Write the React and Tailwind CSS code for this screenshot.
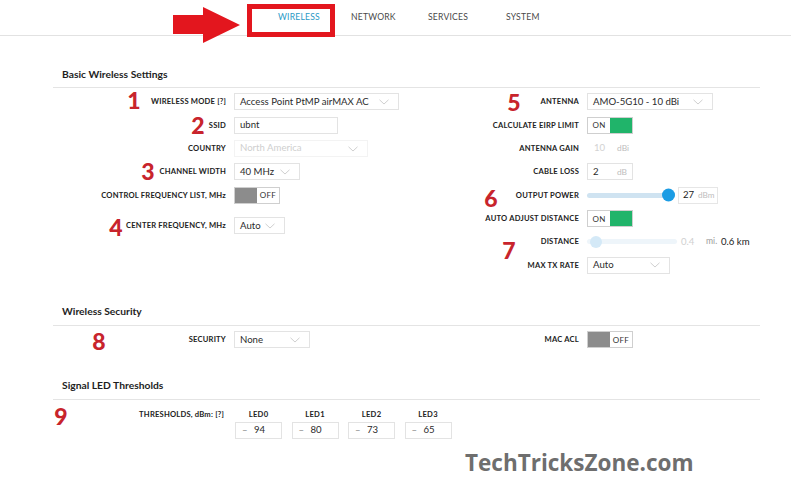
import React from 'react';

const Chevron = () => (
  <svg width="10" height="6" viewBox="0 0 10 6" className="shrink-0">
    <path d="M0.5 0.8 L5 5 L9.5 0.8" fill="none" stroke="#c9c9c9" strokeWidth="0.9" />
  </svg>
);

const Label = ({ children, className = '' }) => (
  <div className={`shrink-0 text-right text-[7.6px] font-bold tracking-[0.2px] text-[#222] ${className}`}>{children}</div>
);

const Select = ({ value, className = '', disabled }) => (
  <div
    className={`flex h-[17px] items-center justify-between border pl-[5px] pr-[9px] text-[9.6px] ${
      disabled ? 'border-[#f3f3f3] text-[#cfcfcf]' : 'border-[#e3e3e3] text-[#2b2b2b]'
    } ${className}`}
  >
    <span>{value}</span>
    <Chevron />
  </div>
);

const Switch = ({ on }) => (
  <div className="flex h-[17px] w-[46px] border border-[#cfcfcf] text-[8px] tracking-[0.3px]">
    {on ? (
      <>
        <div className="flex w-1/2 items-center justify-center text-[#333]">ON</div>
        <div className="w-1/2 bg-[#20b46a]" />
      </>
    ) : (
      <>
        <div className="w-1/2 bg-[#8c8c8c]" />
        <div className="flex w-1/2 items-center justify-center text-[#333]">OFF</div>
      </>
    )}
  </div>
);

const Row = ({ label, labelW, children, className = '' }) => (
  <div className={`flex h-[23.33px] items-center gap-[8px] ${className}`}>
    <Label className={labelW}>{label}</Label>
    {children}
  </div>
);

const Num = ({ n, x, y }) => (
  <span
    className="absolute -translate-x-1/2 -translate-y-1/2 text-[23px] font-black leading-none text-[#c8242c]"
    style={{ left: x, top: y }}
  >
    {n}
  </span>
);

const SectionTitle = ({ children, className = '' }) => (
  <div className={`h-[21px] border-b border-[#e4e4e4] pl-[9px] text-[10.3px] font-bold leading-[14px] text-[#1e1e1e] ${className}`}>
    {children}
  </div>
);

const LeftW = 'w-[173px]';
const RightW = 'w-[179px]';

export default function App() {
  return (
    <div className="relative h-[482px] w-[791px] overflow-hidden bg-white font-['Lato','Noto_Sans',sans-serif]">
      {/* top nav */}
      <div className="flex h-[36px] items-center border-b border-[#e2e2e2] pl-[278px] text-[8.6px] tracking-[0.2px] text-[#4a4a4a]">
        <div className="w-[73px] text-[#2b9ac6]">WIRELESS</div>
        <div className="w-[77px]">NETWORK</div>
        <div className="w-[78px]">SERVICES</div>
        <div>SYSTEM</div>
      </div>

      {/* annotation: arrow + box */}
      <svg className="absolute left-[172px] top-[6px]" width="70" height="38" viewBox="0 0 70 38">
        <path d="M1 9 L31 9 L31 1 L68 19 L31 37 L31 28 L1 28 Z" fill="#e3161e" />
      </svg>
      <div className="absolute left-[247px] top-[4px] h-[33px] w-[88px] border-[5px] border-[#e3161e]" />

      <div className="ml-[53px] w-[707px]">
        <SectionTitle className="mt-[31px]">Basic Wireless Settings</SectionTitle>

        <div className="flex pt-[2.3px]">
          <div className="w-[347px]">
            <Row label="WIRELESS MODE [?]" labelW={LeftW}>
              <Select value="Access Point PtMP airMAX AC" className="w-[165px]" />
            </Row>
            <Row label="SSID" labelW={LeftW}>
              <div className="flex h-[17px] w-[104px] items-center border border-[#e3e3e3] pl-[5px] text-[9.6px] text-[#2b2b2b]">ubnt</div>
            </Row>
            <Row label="COUNTRY" labelW={LeftW}>
              <Select value="North America" disabled className="w-[134px]" />
            </Row>
            <Row label="CHANNEL WIDTH" labelW={LeftW}>
              <Select value="40 MHz" className="w-[66px]" />
            </Row>
            <Row label="CONTROL FREQUENCY LIST, MHz" labelW={LeftW}>
              <Switch on={false} />
            </Row>
            <Row label="CENTER FREQUENCY, MHz" labelW={LeftW} className="mt-[7.3px]">
              <Select value="Auto" className="w-[51px]" />
            </Row>
          </div>

          <div>
            <Row label="ANTENNA" labelW={RightW}>
              <Select value="AMO-5G10 - 10 dBi" className="w-[126px]" />
            </Row>
            <Row label="CALCULATE EIRP LIMIT" labelW={RightW}>
              <Switch on />
            </Row>
            <Row label="ANTENNA GAIN" labelW={RightW}>
              <div className="flex h-[17px] w-[46px] items-center pl-[7px] text-[9.6px] text-[#d2d2d2]">
                <span className="w-[23px]">10</span>
                <span className="text-[8.4px] text-[#bdbdbd]">dBi</span>
              </div>
            </Row>
            <Row label="CABLE LOSS" labelW={RightW}>
              <div className="flex h-[17px] w-[46px] items-center justify-between border border-[#e3e3e3] pl-[5px] pr-[5px] text-[9.6px] text-[#2b2b2b]">
                <span>2</span>
                <span className="text-[8.4px] text-[#bdbdbd]">dB</span>
              </div>
            </Row>
            <Row label="OUTPUT POWER" labelW={RightW}>
              <div className="relative h-[5px] w-[88px] rounded-full bg-[#cfe3f1]">
                <div className="absolute left-[75px] top-1/2 h-[13px] w-[13px] -translate-y-1/2 rounded-full bg-[#1b9ce4]" />
              </div>
              <div className="-ml-[5px] flex h-[17px] w-[40px] items-center border border-[#e6e6e6] pl-[4px] text-[9.6px] text-[#222]">
                <span className="w-[15px]">27</span>
                <span className="text-[8.2px] text-[#bdbdbd]">dBm</span>
              </div>
            </Row>
            <Row label="AUTO ADJUST DISTANCE" labelW={RightW}>
              <Switch on />
            </Row>
            <Row label="DISTANCE" labelW={RightW}>
              <div className="relative h-[5px] w-[90px] rounded-full bg-[#eef5fa]">
                <div className="absolute left-[3px] top-1/2 h-[12px] w-[12px] -translate-y-1/2 rounded-full bg-[#d4e9f7]" />
              </div>
              <div className="flex items-center text-[9.6px]">
                <span className="-ml-[4px] w-[25px] text-[#d0d0d0]">0.4</span>
                <span className="w-[15px] text-[8.6px] text-[#9a9a9a]">mi.</span>
                <span className="text-[#222]">0.6 km</span>
              </div>
            </Row>
            <Row label="MAX TX RATE" labelW={RightW}>
              <Select value="Auto" className="w-[83px]" />
            </Row>
          </div>
        </div>

        <SectionTitle className="mt-[27px] h-[22px]">Wireless Security</SectionTitle>
        <div className="flex pt-[2.3px]">
          <div className="w-[347px]">
            <Row label="SECURITY" labelW={LeftW}>
              <Select value="None" className="w-[76px]" />
            </Row>
          </div>
          <div>
            <Row label="MAC ACL" labelW={RightW}>
              <Switch on={false} />
            </Row>
          </div>
        </div>

        <SectionTitle className="mt-[26px] h-[22px]">Signal LED Thresholds</SectionTitle>
        <div className="flex gap-[11px] pt-[9px]">
          <Label className="w-[171px] leading-[10px]">THRESHOLDS, dBm: [?]</Label>
          <div className="flex gap-[9.5px]">
            {[
              ['LED0', '94'],
              ['LED1', '80'],
              ['LED2', '73'],
              ['LED3', '65'],
            ].map(([name, v]) => (
              <div key={name} className="flex w-[47px] flex-col items-center">
                <div className="text-[7.6px] font-bold leading-[10px] tracking-[0.3px] text-[#222]">{name}</div>
                <div className="mt-[3px] flex h-[17px] w-[47px] items-center border border-[#e3e3e3] pl-[6px] text-[9.6px] text-[#2b2b2b]">
                  <span className="w-[12px] text-[#888]">–</span>
                  <span>{v}</span>
                </div>
              </div>
            ))}
          </div>
        </div>
      </div>

      {/* annotation numbers */}
      <Num n="1" x={134} y={100} />
      <Num n="2" x={198} y={125} />
      <Num n="3" x={148} y={171} />
      <Num n="4" x={116} y={227} />
      <Num n="5" x={514} y={102} />
      <Num n="6" x={491} y={198} />
      <Num n="7" x={509} y={250} />
      <Num n="8" x={99} y={341} />
      <Num n="9" x={61} y={416} />

      <div className="absolute left-[465px] top-[450px] font-['Open_Sans',sans-serif] text-[22.5px] font-bold leading-[26px] text-[#6e6e6e]">
        TechTricksZone.com
      </div>
    </div>
  );
}
